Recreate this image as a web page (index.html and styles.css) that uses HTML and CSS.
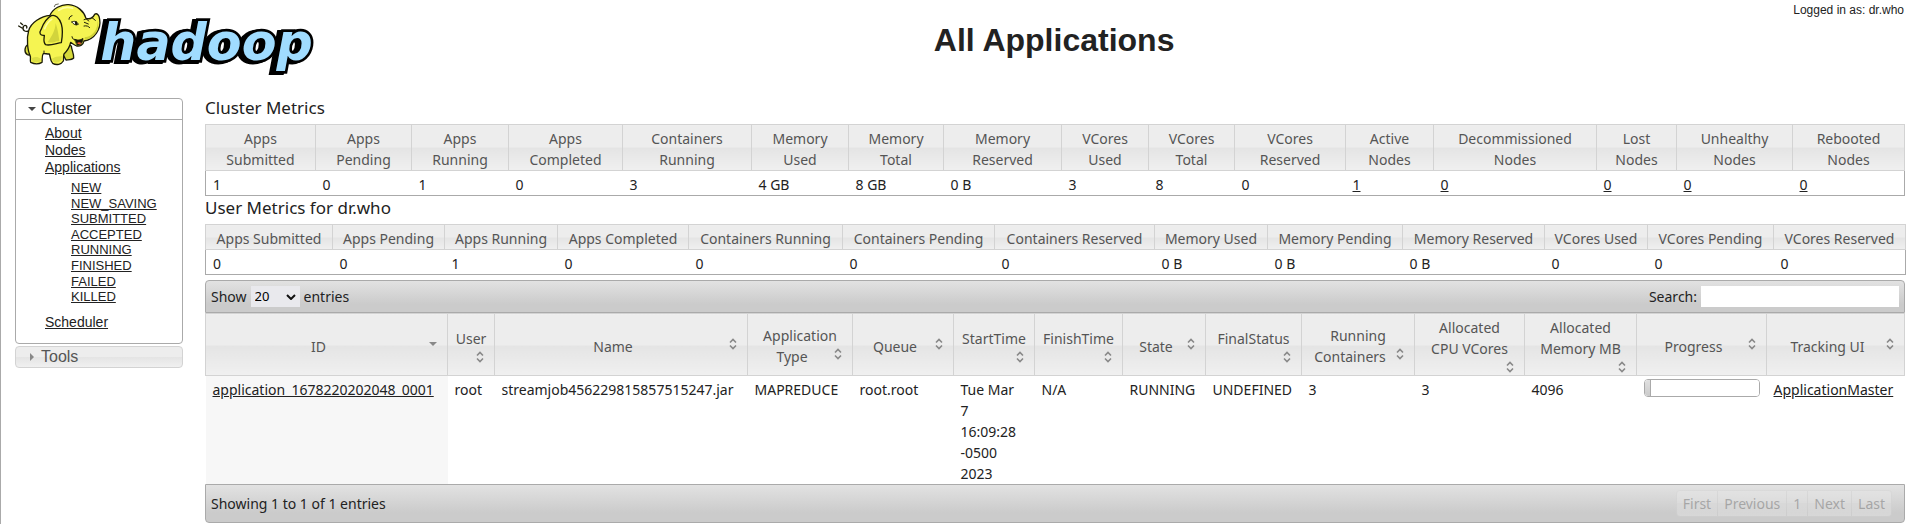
FILE: index.html
```html
<!DOCTYPE html>
<html lang="en">
<head>
<meta charset="utf-8">
<title>All Applications</title>
<link rel="stylesheet" href="styles.css">
</head>
<body>
<header class="page-header">
  <svg class="logo" viewBox="45 0 900 240" role="img" aria-label="hadoop">
    <text class="logo-shadow" x="290" y="184">hadoop</text>
    <text class="logo-text" x="301" y="181">hadoop</text>
    <g stroke="#1c1c08" stroke-linejoin="round" stroke-linecap="round">
      <path d="M88 92C76 98 66 91 70 80C74 73 83 77 80 84M66 84L56 78M68 74L62 69" fill="none" stroke-width="4"/>
      <path d="M86 132C72 140 72 158 82 164C90 168 96 160 98 152Z" fill="#d9dc3c" stroke-width="4"/>
      <path d="M196 130L214 138C215 152 222 160 221 174C216 180 204 179 198 180L186 158Z" fill="#d6d93a" stroke-width="4"/>
      <path d="M86 92C92 68 124 48 150 46C158 26 184 12 206 14C232 16 252 34 258 55C268 58 278 55 284 43C290 38 298 44 299 58C304 86 284 118 252 123C250 134 240 140 230 138C222 135 217 130 212 127C209 142 200 154 192 162C189 170 192 176 190 183C184 193 170 197 158 190C150 182 152 172 148 162C140 162 134 160 130 161C124 168 128 178 126 187C116 193 102 192 92 187C89 180 94 174 90 166C84 154 78 118 86 92Z" fill="#f5f452" stroke-width="4"/>
      <path d="M224 118C234 122 242 120 249 115C249 128 242 136 232 136Z" fill="#171708" stroke-width="2"/>
      <path d="M231 129C236 125 241 126 244 130C240 134 235 134 231 129Z" fill="#ef5b33" stroke="none"/>
      <path d="M154 47C166 43 178 54 184 72C190 92 187 111 184 128C170 130 150 138 137 134C128 126 133 114 133 106C121 108 116 99 123 89C130 70 141 54 154 47Z" fill="#f3f24a" stroke-width="4"/>
      <path d="M143 126C154 112 166 91 167 69C174 90 176 107 178 123C165 124 153 131 143 126Z" fill="#d2d43c" stroke="none"/>
      <path d="M96 174C105 169 115 170 122 176L122 184C112 188 103 188 97 184ZM156 176C166 170 178 168 186 169L184 180C178 187 168 190 160 185Z" fill="#dcdf43" stroke="none"/>
      <path d="M254 112C279 109 293 89 293 62C301 91 281 116 254 119Z" fill="#d0d336" stroke="none"/>
      <path d="M176 31C188 22 204 20 218 25M155 58C146 64 138 76 134 86" fill="none" stroke="#fdffa5" stroke-width="5"/>
      <path d="M216 66C222 62 230 63 235 73C228 76 220 74 216 66Z" fill="#fff" stroke-width="3"/>
      <path d="M228 67L229 72" stroke-width="7"/>
      <path d="M207 58C207 52 211 48 216 47M252 59C258 56 264 58 266 63M253 67L265 72M252 78C260 76 266 79 269 83M276 53L286 61M216 110C217 117 222 121 228 119M132 160L132 153" fill="none" stroke-width="3"/>
      <path d="M163 20L166 14L175 12" fill="none" stroke-width="2"/>
    </g>
  </svg>
  <h1 class="page-title">All Applications</h1>
  <div class="login">Logged in as: dr.who</div>
</header>
<div class="layout">
  <nav class="sidebar">
    <section class="panel">
      <h3 class="panel-head panel-head-open"><svg class="tri" viewBox="0 0 8 8"><path d="M0 2h8L4 6z" fill="#454545"/></svg>Cluster</h3>
      <ul class="nav">
        <li><a href="#">About</a></li>
        <li><a href="#">Nodes</a></li>
        <li><a href="#">Applications</a>
          <ul class="subnav">
            <li><a href="#">NEW</a></li>
            <li><a href="#">NEW_SAVING</a></li>
            <li><a href="#">SUBMITTED</a></li>
            <li><a href="#">ACCEPTED</a></li>
            <li><a href="#">RUNNING</a></li>
            <li><a href="#">FINISHED</a></li>
            <li><a href="#">FAILED</a></li>
            <li><a href="#">KILLED</a></li>
          </ul>
        </li>
        <li><a href="#">Scheduler</a></li>
      </ul>
    </section>
    <h3 class="panel-head panel-closed"><svg class="tri" viewBox="0 0 8 8"><path d="M2 0v8l4-4z" fill="#888"/></svg>Tools</h3>
  </nav>
  <main class="content">
    <h2 class="section-title">Cluster Metrics</h2>
    <table class="grid metrics cluster">
      <colgroup><col class="w110"><col class="w96"><col class="w97"><col class="w114"><col class="w129"><col class="w97"><col class="w95"><col class="w118"><col class="w87"><col class="w86"><col class="w111"><col class="w88"><col class="w163"><col class="w80"><col class="w116"><col class="w112"></colgroup>
      <thead><tr><th>Apps Submitted</th><th>Apps Pending</th><th>Apps Running</th><th>Apps Completed</th><th>Containers Running</th><th>Memory<br>Used</th><th>Memory<br>Total</th><th>Memory Reserved</th><th>VCores<br>Used</th><th>VCores<br>Total</th><th>VCores Reserved</th><th>Active<br>Nodes</th><th>Decommissioned Nodes</th><th>Lost<br>Nodes</th><th>Unhealthy Nodes</th><th>Rebooted Nodes</th></tr></thead>
      <tbody><tr><td>1</td><td>0</td><td>1</td><td>0</td><td>3</td><td>4 GB</td><td>8 GB</td><td>0 B</td><td>3</td><td>8</td><td>0</td><td><a href="#">1</a></td><td><a href="#">0</a></td><td><a href="#">0</a></td><td><a href="#">0</a></td><td><a href="#">0</a></td></tr></tbody>
    </table>
    <h2 class="section-title">User Metrics for dr.who</h2>
    <table class="grid metrics">
      <colgroup><col class="w127"><col class="w112"><col class="w113"><col class="w131"><col class="w154"><col class="w152"><col class="w160"><col class="w113"><col class="w135"><col class="w142"><col class="w103"><col class="w126"><col class="w132"></colgroup>
      <thead><tr><th>Apps Submitted</th><th>Apps Pending</th><th>Apps Running</th><th>Apps Completed</th><th>Containers Running</th><th>Containers Pending</th><th>Containers Reserved</th><th>Memory Used</th><th>Memory Pending</th><th>Memory Reserved</th><th>VCores Used</th><th>VCores Pending</th><th>VCores Reserved</th></tr></thead>
      <tbody><tr><td>0</td><td>0</td><td>1</td><td>0</td><td>0</td><td>0</td><td>0</td><td>0 B</td><td>0 B</td><td>0 B</td><td>0</td><td>0</td><td>0</td></tr></tbody>
    </table>
    <div class="toolbar toolbar-top">
      <label class="field">Show
        <span class="select-wrap"><select><option>20</option><option>40</option><option>60</option><option>80</option><option>100</option></select><svg class="chevron" viewBox="0 0 10 6"><path d="M1 1l4 4 4-4" fill="none" stroke="#111" stroke-width="2"/></svg></span>
        entries</label>
      <label class="field">Search: <input class="search" type="text"></label>
    </div>
    <table class="grid apps">
      <colgroup><col class="w242"><col class="w47"><col class="w253"><col class="w105"><col class="w101"><col class="w81"><col class="w88"><col class="w83"><col class="w96"><col class="w113"><col class="w110"><col class="w112"><col class="w130"><col class="w138"></colgroup>
      <thead><tr>
        <th>ID<svg class="sort" viewBox="0 0 16 16"><path d="M4 6h8L8 10z" fill="#888"/></svg></th>
        <th>User<svg class="sort" viewBox="0 0 16 16"><use href="#both"/></svg></th>
        <th>Name<svg class="sort" viewBox="0 0 16 16"><use href="#both"/></svg></th>
        <th>Application Type<svg class="sort" viewBox="0 0 16 16"><use href="#both"/></svg></th>
        <th>Queue<svg class="sort" viewBox="0 0 16 16"><use href="#both"/></svg></th>
        <th>StartTime<svg class="sort" viewBox="0 0 16 16"><use href="#both"/></svg></th>
        <th>FinishTime<svg class="sort" viewBox="0 0 16 16"><use href="#both"/></svg></th>
        <th>State<svg class="sort" viewBox="0 0 16 16"><use href="#both"/></svg></th>
        <th>FinalStatus<svg class="sort" viewBox="0 0 16 16"><use href="#both"/></svg></th>
        <th>Running Containers<svg class="sort" viewBox="0 0 16 16"><use href="#both"/></svg></th>
        <th>Allocated<br>CPU VCores<br><svg class="sort" viewBox="0 0 16 16"><use href="#both"/></svg></th>
        <th>Allocated<br>Memory MB<br><svg class="sort" viewBox="0 0 16 16"><use href="#both"/></svg></th>
        <th>Progress<svg class="sort" viewBox="0 0 16 16"><use href="#both"/></svg></th>
        <th>Tracking UI<svg class="sort" viewBox="0 0 16 16"><use href="#both"/></svg></th>
      </tr></thead>
      <tbody><tr>
        <td class="sorted"><a href="#">application_1678220202048_0001</a></td><td>root</td><td>streamjob456229815857515247.jar</td><td>MAPREDUCE</td><td>root.root</td><td>Tue Mar<br>7<br>16:09:28<br>-0500<br>2023</td><td>N/A</td><td>RUNNING</td><td>UNDEFINED</td><td>3</td><td>3</td><td>4096</td><td><progress class="progress" max="100" value="6" aria-label="Progress"></progress></td><td><a href="#">ApplicationMaster</a></td>
      </tr></tbody>
    </table>
    <div class="toolbar toolbar-bottom">
      <span>Showing 1 to 1 of 1 entries</span>
      <div class="pager"><button disabled>First</button><button disabled>Previous</button><button disabled>1</button><button disabled>Next</button><button disabled>Last</button></div>
    </div>
  </main>
</div>
<svg class="defs" aria-hidden="true"><defs><path id="both" d="M5 6.5L8 3.5L11 6.5M5 9.5L8 12.5L11 9.5" fill="none" stroke="#888" stroke-width="1.6"/></defs></svg>
</body>
</html>
```
FILE: styles.css
```css
* { box-sizing: border-box; }
body {
  margin: 0;
  min-height: 100vh;
  border-left: 1px solid #aaa;
  background: #fff;
  color: #222;
  font: 14px/21px "Noto Sans", sans-serif;
}
a { color: #222; }
h1, h2, h3, ul { margin: 0; padding: 0; font-weight: normal; }
ul { list-style: none; }
.defs { position: absolute; width: 0; height: 0; }

.page-header {
  display: flex;
  align-items: flex-start;
  padding: 0 8px 18px 14px;
  font-family: "Liberation Sans", sans-serif;
}
.logo { width: 300px; height: 80px; flex: none; }
.logo text {
  font: italic bold 152px "DejaVu Sans", sans-serif;
  paint-order: stroke;
  stroke: #000;
  stroke-linejoin: miter;
}
.logo-shadow { fill: #000; stroke-width: 18px; }
.logo-text { fill: #a0dcff; stroke-width: 16px; }
.page-title {
  flex: 1;
  padding-top: 22px;
  text-align: center;
  font-size: 32px;
  line-height: 36px;
  font-weight: bold;
}
.login { padding-top: 3px; font-size: 12px; line-height: 15px; }

.layout { display: flex; gap: 22px; padding: 0 7px 2px 14px; }
.sidebar { flex: none; width: 168px; font-family: "Liberation Sans", sans-serif; }
.panel { border: 1px solid #aaa; border-radius: 4px; margin-bottom: 2px; }
.panel-head {
  display: flex;
  align-items: center;
  gap: 5px;
  padding: 0 0 0 12px;
  font-size: 16px;
  line-height: 20px;
}
.panel-head-open { border-bottom: 1px solid #aaa; }
.panel-closed {
  border: 1px solid #d3d3d3;
  border-radius: 4px;
  color: #555;
  background: linear-gradient(#ededed 50%, #e4e4e4 50%, #f0f0f0);
}
.tri { width: 8px; height: 8px; }
.nav { padding: 5px 0 12px 29px; font-size: 14px; line-height: 17px; }
.subnav { padding: 4px 0 9px 26px; font-size: 13px; line-height: 1.2; }

.content { flex: 1; min-width: 0; }
.section-title { padding-top: 2px; margin-bottom: 6px; font-size: 17px; line-height: 20px; }
.section-title:first-child { padding-top: 0; }

.grid { width: 100%; table-layout: fixed; border-collapse: collapse; }
.grid th {
  padding: 3px 6px 0;
  border: 1px solid #d3d3d3;
  color: #555;
  font-weight: normal;
  vertical-align: middle;
  background: linear-gradient(#ededed 50%, #e4e4e4 50%, #f0f0f0);
}
.cluster th { padding: 3px 10px 0; }
.grid td { padding: 3px 0 0 7px; vertical-align: top; }
.metrics { border: 1px solid #aaa; }
.sorted { background: #f7f7f7; }
.sort { display: block; float: right; width: 16px; height: 16px; }

.toolbar {
  display: flex;
  justify-content: space-between;
  align-items: center;
  padding: 5px;
  border: 1px solid #aaa;
  background: linear-gradient(#e2e2e2, #cbcbcb 75%, #cbcbcb);
}
.toolbar-top { margin-top: 5px; border-radius: 4px 4px 0 0; }
.toolbar-bottom { border-radius: 0 0 4px 4px; padding-right: 12px; }
.field { display: flex; align-items: center; gap: 4px; }
.select-wrap { display: grid; align-items: center; }
.select-wrap > * { grid-area: 1 / 1; }
.select-wrap select {
  appearance: none;
  width: 49px;
  height: 21px;
  padding: 0 4px;
  border: 0;
  border-radius: 0;
  background: #e9e9ed;
  color: #000;
  font: 13px/21px "Noto Sans", sans-serif;
}
.chevron { width: 10px; height: 6px; justify-self: end; margin-right: 4px; pointer-events: none; }
.search { width: 198px; height: 21px; border: 0; padding: 0 4px; background: #fff; font: inherit; }

.progress {
  appearance: none;
  display: block;
  width: 116px;
  height: 18px;
  border: 1px solid #aaa;
  border-radius: 4px;
  overflow: hidden;
  background: #fff;
}
.progress::-webkit-progress-bar { background: #fff; }
.progress::-webkit-progress-value {
  border-right: 1px solid #aaa;
  background: linear-gradient(#e0e0e0, #cbcbcb);
}

.pager { display: flex; opacity: 0.35; }
.pager button {
  padding: 2px 6px;
  border: 1px solid #d3d3d3;
  border-left-width: 0;
  background: linear-gradient(#ededed 50%, #e4e4e4 50%, #f0f0f0);
  color: #555;
  font: inherit;
}
.pager button:first-child { border-left-width: 1px; border-radius: 4px 0 0 4px; }
.pager button:last-child { border-radius: 0 4px 4px 0; }

.w47 { width: 47px; }
.w80 { width: 80px; }
.w81 { width: 81px; }
.w83 { width: 83px; }
.w86 { width: 86px; }
.w87 { width: 87px; }
.w88 { width: 88px; }
.w95 { width: 95px; }
.w96 { width: 96px; }
.w97 { width: 97px; }
.w101 { width: 101px; }
.w103 { width: 103px; }
.w105 { width: 105px; }
.w110 { width: 110px; }
.w111 { width: 111px; }
.w112 { width: 112px; }
.w113 { width: 113px; }
.w114 { width: 114px; }
.w116 { width: 116px; }
.w118 { width: 118px; }
.w126 { width: 126px; }
.w127 { width: 127px; }
.w129 { width: 129px; }
.w130 { width: 130px; }
.w131 { width: 131px; }
.w132 { width: 132px; }
.w135 { width: 135px; }
.w138 { width: 138px; }
.w142 { width: 142px; }
.w152 { width: 152px; }
.w154 { width: 154px; }
.w160 { width: 160px; }
.w163 { width: 163px; }
.w242 { width: 242px; }
.w253 { width: 253px; }
```
